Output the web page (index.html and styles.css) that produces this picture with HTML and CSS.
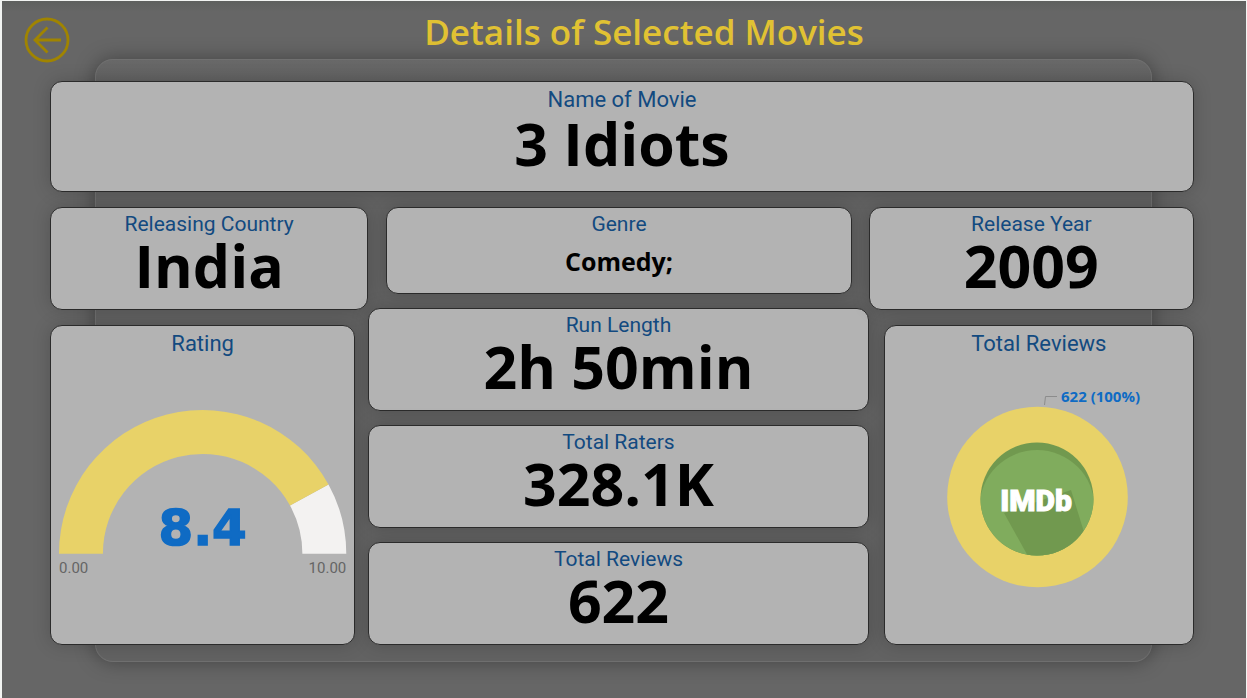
FILE: index.html
```html
<!DOCTYPE html>
<html lang="en">
<head>
<meta charset="utf-8">
<title>Details of Selected Movies</title>
<link rel="stylesheet" href="styles.css">
</head>
<body>
<header class="header">
  <button class="back" type="button" aria-label="Back">
    <svg class="back-icon" viewBox="0 0 46 46" aria-hidden="true">
      <circle cx="23" cy="23" r="21"/>
      <path d="M37 23H10.500M23.500 10.500L11 23L23.500 35.500"/>
    </svg>
  </button>
  <h1 class="title">Details of Selected Movies</h1>
</header>
<main class="panel">
  <div class="board">
    <section class="card card-name">
      <h2 class="label label-large">Name of Movie</h2>
      <p class="value">3 Idiots</p>
    </section>
    <div class="columns">
      <div class="column">
        <section class="card card-fact">
          <h2 class="label">Releasing Country</h2>
          <p class="value">India</p>
        </section>
        <section class="card card-rating">
          <h2 class="label label-large">Rating</h2>
          <div class="gauge">
            <svg class="gauge-chart" viewBox="0 0 288 144" role="img" aria-label="Rating 8.4 of 10">
              <path class="track" d="M270.200 74.600A144 144 0 0 1 288 144H244A100 100 0 0 0 231.600 95.800Z"/>
              <path class="fill" d="M0 144A144 144 0 0 1 270.200 74.600L231.600 95.800A100 100 0 0 0 44 144Z"/>
              <text class="gauge-value" x="144" y="135">8.4</text>
            </svg>
            <div class="scale"><span>0.00</span><span>10.00</span></div>
          </div>
        </section>
      </div>
      <div class="column column-center">
        <section class="card card-genre">
          <h2 class="label">Genre</h2>
          <p class="value value-small">Comedy;</p>
        </section>
        <section class="card">
          <h2 class="label">Run Length</h2>
          <p class="value">2h 50min</p>
        </section>
        <section class="card">
          <h2 class="label">Total Raters</h2>
          <p class="value">328.1K</p>
        </section>
        <section class="card">
          <h2 class="label">Total Reviews</h2>
          <p class="value">622</p>
        </section>
      </div>
      <div class="column">
        <section class="card card-fact">
          <h2 class="label">Release Year</h2>
          <p class="value">2009</p>
        </section>
        <section class="card card-reviews">
          <h2 class="label label-large">Total Reviews</h2>
          <div class="donut">
            <svg class="donut-chart" viewBox="0 0 220 200" role="img" aria-label="622 reviews, 100%">
              <defs><clipPath id="disc"><circle cx="108" cy="107" r="56.500"/></clipPath></defs>
              <circle class="fill" cx="108.500" cy="105" r="90.300"/>
              <g clip-path="url(#disc)">
                <circle class="disc-dark" cx="108" cy="107" r="58"/>
                <circle class="disc-light" cx="108" cy="115.500" r="57.500"/>
                <path class="disc-dark" d="M75 121L100 166H160L155 140L142 98Z"/>
              </g>
              <text class="logo" x="107" y="119">IMDb</text>
              <path class="leader" d="M115.500 13L116.500 4.500H128"/>
              <text class="donut-label" x="132" y="10">622 (100%)</text>
            </svg>
          </div>
        </section>
      </div>
    </div>
  </div>
</main>
</body>
</html>
```
FILE: styles.css
```css
* {
  box-sizing: border-box;
}

body {
  margin: 0;
  min-height: 100vh;
  display: flex;
  flex-direction: column;
  border: solid #f2f4f2;
  border-width: 1px 1px 0 2px;
  background: linear-gradient(#5e605e, #666 12px);
  background-color: #666;
  font-family: "Open Sans", "Noto Sans", sans-serif;
}

.header {
  display: flex;
  align-items: center;
  height: 58px;
  padding: 0 28px 0 22px;
}

.back {
  width: 46px;
  height: 46px;
  margin-top: 20px;
  padding: 0;
  border: 0;
  background: none;
  cursor: pointer;
}

.back-icon {
  display: block;
  width: 100%;
  fill: none;
  stroke: #a08400;
  stroke-width: 2.8;
}

.title {
  flex: 1;
  margin: 0;
  padding-top: 4px;
  color: #e1c233;
  font-size: 35px;
  font-weight: 600;
  line-height: 48px;
  text-align: center;
}

.panel {
  flex: 1;
  display: flex;
  margin: 0 94px 36px 93px;
  padding: 21px 0 16px;
  border: 1px solid #707070;
  border-radius: 18px;
  background: linear-gradient(#686868, #626262 20px, #626262);
  box-shadow: 0 0 20px rgba(0, 0, 0, 0.35);
}

.board {
  flex: 1;
  display: flex;
  flex-direction: column;
  gap: 15px;
  margin: 0 -43px 0 -46px;
}

.card {
  display: flex;
  flex-direction: column;
  padding: 4px 8px 0;
  border: 1px solid #2b2b2b;
  border-radius: 12px;
  background: #b3b3b3;
  box-shadow: 0 0 18px rgba(0, 0, 0, 0.18);
  text-align: center;
}

.card-name {
  height: 111px;
}

.label {
  margin: 0;
  color: #124a80;
  font-family: Roboto, sans-serif;
  font-size: 21px;
  font-weight: 400;
  line-height: 24px;
}

.label-large {
  font-size: 22px;
  line-height: 28px;
}

.value {
  margin: 0;
  color: #000;
  font-size: 59px;
  font-weight: 700;
  line-height: 58px;
}

.value-small {
  font-size: 25px;
  line-height: 50px;
}

.columns {
  flex: 1;
  display: grid;
  grid-template-columns: 318fr 500fr 325fr;
}

.column {
  display: flex;
  flex-direction: column;
  gap: 15px;
}

.column-center {
  gap: 14px;
}

.column-center .card {
  flex: 1 0 101px;
}

.column-center .card-genre {
  flex: 0 0 87px;
  margin: 0 17px 0 18px;
}

.card-fact {
  min-height: 103px;
}

.card-rating {
  flex: 1;
  margin-right: 13px;
}

.card-reviews {
  flex: 1;
  margin-left: 15px;
}

.fill {
  fill: #e8d268;
}

.track {
  fill: #f3f2f1;
}

.gauge,
.donut {
  flex: 1;
  display: flex;
  flex-direction: column;
  justify-content: center;
  padding-bottom: 10px;
}

.gauge-chart {
  display: block;
  width: 100%;
  overflow: visible;
}

.gauge-value {
  fill: #0f6bc4;
  stroke: #0f6bc4;
  stroke-width: 1.5;
  font-family: "DejaVu Sans", sans-serif;
  font-size: 50px;
  font-weight: 700;
  text-anchor: middle;
}

.scale {
  display: flex;
  justify-content: space-between;
  color: #656565;
  font-family: Roboto, sans-serif;
  font-size: 15px;
  line-height: 28px;
}

.donut {
  align-items: center;
  padding-bottom: 18px;
}

.donut-chart {
  display: block;
  width: 220px;
  overflow: visible;
}

.disc-dark {
  fill: #71994f;
}

.disc-light {
  fill: #80ac5d;
}

.logo {
  fill: #fff;
  stroke: #fff;
  stroke-width: 1;
  font-family: Roboto, sans-serif;
  font-size: 30px;
  font-weight: 900;
  text-anchor: middle;
}

.leader {
  fill: none;
  stroke: #8c8c8c;
  stroke-width: 1;
}

.donut-label {
  fill: #0f6bc4;
  font-size: 15px;
  font-weight: 700;
}
```
